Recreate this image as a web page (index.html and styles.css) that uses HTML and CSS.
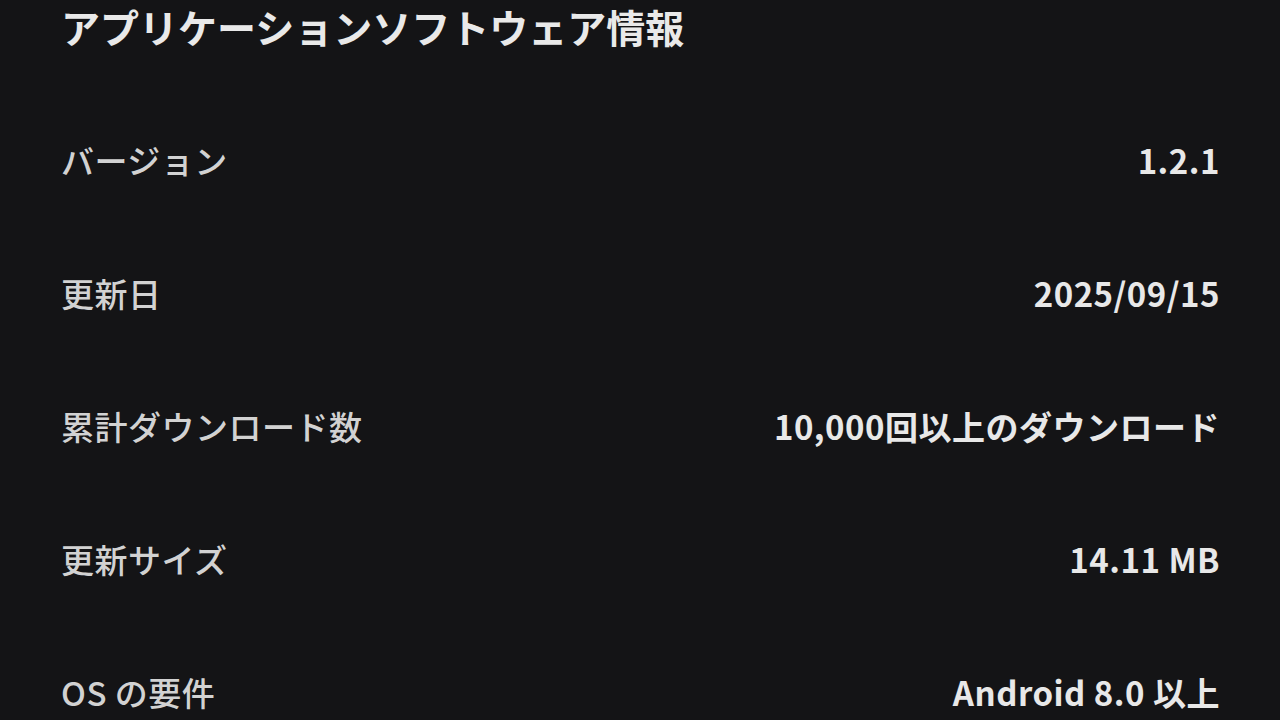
FILE: index.html
```html
<!DOCTYPE html>
<html lang="ja">
<head>
    <meta charset="UTF-8">
    <meta name="viewport" content="width=device-width, initial-scale=1.0">
    <title>アプリケーションソフトウェア情報</title>
    <link rel="stylesheet" href="styles.css">
</head>
<body>
    <div class="info">
        <h1 class="info-title">アプリケーションソフトウェア情報</h1>
        <div class="info-list">
            <div class="info-row">
                <span class="info-label">バージョン</span>
                <span class="info-value">1.2.1</span>
            </div>
            <div class="info-row">
                <span class="info-label">更新日</span>
                <span class="info-value">2025/09/15</span>
            </div>
            <div class="info-row">
                <span class="info-label">累計ダウンロード数</span>
                <span class="info-value">10,000回以上のダウンロード</span>
            </div>
            <div class="info-row">
                <span class="info-label">更新サイズ</span>
                <span class="info-value">14.11 MB</span>
            </div>
            <div class="info-row">
                <span class="info-label">OS の要件</span>
                <span class="info-value">Android 8.0 以上</span>
            </div>
        </div>
    </div>
</body>
</html>
```

FILE: styles.css
```css
body {
    margin: 0;
    padding: 0;
    background: #141416;
    font-family: "Noto Sans CJK JP", "Noto Sans", sans-serif;
    color: #e6e6e6;
    height: 100vh;
    overflow: hidden;
}

.info {
    padding: 0 60px 0 61px;
}

.info-title {
    margin: 0;
    height: 52px;
    line-height: 52px;
    font-size: 39px;
    font-weight: 700;
    color: #e9e9e9;
}

.info-list {
    display: flex;
    flex-direction: column;
    margin-top: 41px;
}

.info-row {
    display: flex;
    justify-content: space-between;
    align-items: center;
    height: 133px;
}

.info-label {
    font-size: 33px;
    font-weight: 500;
    letter-spacing: 0.5px;
    color: #d2d2d2;
}

.info-value {
    font-size: 33px;
    font-weight: 700;
    letter-spacing: 0.5px;
    color: #e8e8e8;
}
```
